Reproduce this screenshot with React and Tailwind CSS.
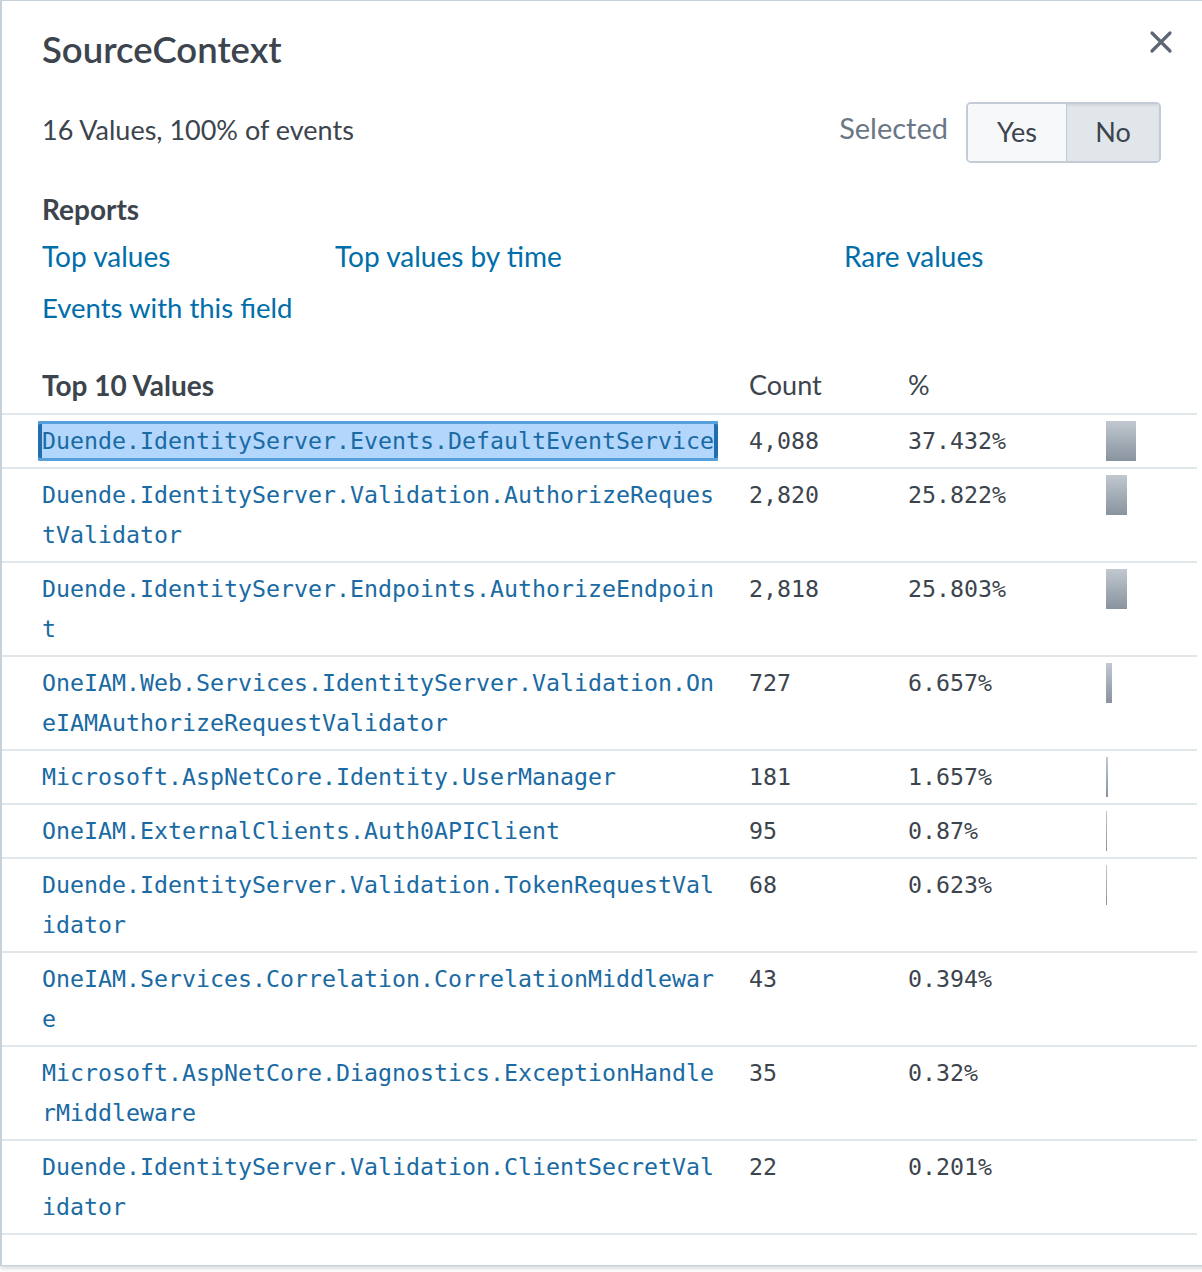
import React from "react";

const rows = [
  ["Duende.IdentityServer.Events.DefaultEventService", "4,088", "37.432%", 30],
  ["Duende.IdentityServer.Validation.AuthorizeRequestValidator", "2,820", "25.822%", 21],
  ["Duende.IdentityServer.Endpoints.AuthorizeEndpoint", "2,818", "25.803%", 21],
  ["OneIAM.Web.Services.IdentityServer.Validation.OneIAMAuthorizeRequestValidator", "727", "6.657%", 6],
  ["Microsoft.AspNetCore.Identity.UserManager", "181", "1.657%", 2],
  ["OneIAM.ExternalClients.Auth0APIClient", "95", "0.87%", 1],
  ["Duende.IdentityServer.Validation.TokenRequestValidator", "68", "0.623%", 1],
  ["OneIAM.Services.Correlation.CorrelationMiddleware", "43", "0.394%", 0],
  ["Microsoft.AspNetCore.Diagnostics.ExceptionHandlerMiddleware", "35", "0.32%", 0],
  ["Duende.IdentityServer.Validation.ClientSecretValidator", "22", "0.201%", 0],
];

const sans = { fontFamily: "Lato, 'Open Sans', sans-serif" };

export default function App() {
  return (
    <div className="bg-white min-h-[1272px]" style={sans}>
      <div className="relative w-[1210px] border-t border-l-2 border-b border-[#c8d0d8] bg-white shadow-[0_2px_5px_rgba(0,0,0,0.18)] pb-[30px]">
        <button className="absolute left-[1144px] top-[26px] w-[30px] h-[30px] flex items-center justify-center">
          <svg width="24" height="24" viewBox="0 0 24 24">
            <path d="M3 3L21 21M21 3L3 21" stroke="#5c6773" strokeWidth="3.2" strokeLinecap="round" />
          </svg>
        </button>

        <div className="pl-[40px] pt-[30px]">
          <h1 className="text-[36.5px] leading-[36px] font-semibold text-[#3c444d]">SourceContext</h1>

          <div className="mt-[35px] flex items-center h-[61px] pr-[49px]">
            <div className="text-[27px] text-[#3c444d] flex-1 pb-[4px]">16 Values, 100% of events</div>
            <div className="text-[29px] text-[#6b7785] mr-[18px] pb-[10px]">Selected</div>
            <div className="flex h-[61px] w-[195px] border-2 border-[#c3cbd4] rounded-[5px] overflow-hidden text-[27px] text-[#3c444d]">
              <div className="w-[99px] bg-[#f7f8fa] border-r border-[#c3cbd4] flex items-center justify-center">Yes</div>
              <div className="flex-1 bg-[#e1e6eb] shadow-[inset_0_2px_2px_rgba(0,0,0,0.06)] flex items-center justify-center">No</div>
            </div>
          </div>

          <div className="mt-[32px] text-[28px] leading-[28px] font-bold text-[#3c444d]">Reports</div>
          <div className="mt-[7px] text-[28px] text-[#006eaa]">
            <div className="flex h-[52px] items-center">
              <a className="w-[293px]">Top values</a>
              <a className="w-[509px]">Top values by time</a>
              <a>Rare values</a>
            </div>
            <div className="flex h-[52px] items-center">
              <a className="text-[27.5px]">Events with this field</a>
            </div>
          </div>
        </div>

        <div className="mt-[29px] mr-[13px]">
          <div className="grid grid-cols-[747px_159px_198px_1fr] h-[52px] items-center border-b-2 border-[#e1e6eb] text-[27px] text-[#3c444d] pb-[6px]">
            <div className="pl-[40px] font-bold text-[28px]">Top 10 Values</div>
            <div>Count</div>
            <div>%</div>
            <div></div>
          </div>
          {rows.map(([name, count, pct, bar], i) => (
            <div
              key={i}
              className="grid grid-cols-[747px_159px_198px_1fr] border-b-2 border-[#e1e6eb] py-[6px] text-[23.25px] leading-[40px]"
              style={{ fontFamily: "'DejaVu Sans Mono', monospace" }}
            >
              <div className="pl-[40px] pr-[30px] break-all text-[#1a6aa3]">
                {i === 0 ? (
                  <span className="inline-block -ml-[4px] px-[4px] bg-[#b3d6fc] rounded-[2px] shadow-[inset_0_3px_0_#58a0dc,inset_0_-3px_0_#58a0dc,inset_4px_0_0_#1f6fae,inset_-4px_0_0_#1f6fae]">
                    {name}
                  </span>
                ) : (
                  name
                )}
              </div>
              <div className="text-[#3c444d]">{count}</div>
              <div className="text-[#3c444d]">{pct}</div>
              <div>
                {bar > 0 && (
                  <div
                    className="h-[40px] bg-gradient-to-b from-[#c1c8d0] to-[#89939e]"
                    style={{ width: bar + "px" }}
                  />
                )}
              </div>
            </div>
          ))}
        </div>
      </div>
    </div>
  );
}
